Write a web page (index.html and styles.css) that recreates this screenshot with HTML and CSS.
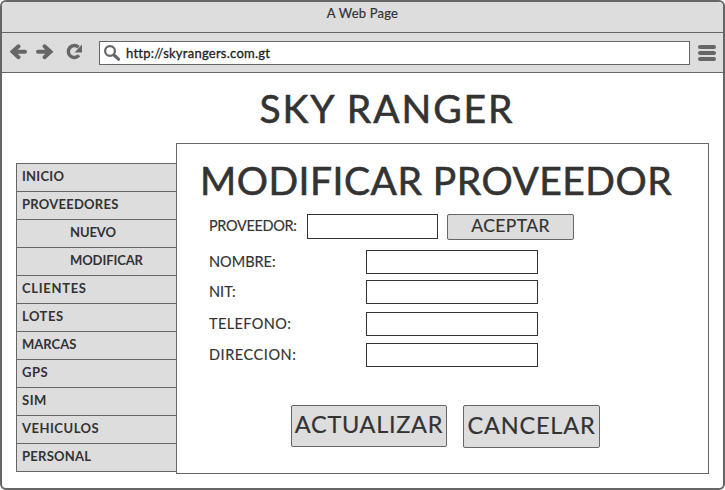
FILE: index.html
```html
<!DOCTYPE html>
<html lang="es">
<head>
<meta charset="utf-8">
<title>A Web Page</title>
<link rel="stylesheet" href="styles.css">
</head>
<body>
<div class="window">
  <header class="titlebar"><span>A Web Page</span></header>
  <nav class="toolbar">
    <svg class="nav-icons" width="76" height="20" viewBox="0 0 76 20" fill="none" stroke="#666" stroke-width="4">
      <path d="M8.500 4.300 2.500 9.700l6 5.500M3.500 9.700h11.500" stroke-linecap="round"/>
      <path d="M34.500 4.300l6 5.400-6 5.500M39.500 9.700H28" stroke-linecap="round"/>
      <path d="M68.500 5.200A6 6 0 1 0 69 13.300" stroke-width="3.400"/>
      <path d="M72 2.500v8h-7.500z" fill="#666" stroke="none"/>
    </svg>
    <div class="address">
      <svg width="18" height="18" viewBox="0 0 18 18" fill="none" stroke="#666"><circle cx="6" cy="6" r="4.900" stroke-width="2.200"/><path d="m10.500 10.500 4 3.700" stroke-width="3.200" stroke-linecap="round"/></svg>
      <span class="url">http://skyrangers.com.gt</span>
    </div>
    <div class="menu-icon"><i></i><i></i><i></i></div>
  </nav>
  <h1><span>SKY RANGER</span></h1>
  <main class="content">
    <ul class="sidebar">
      <li class="snug">INICIO</li>
      <li class="snug">PROVEEDORES</li>
      <li class="sub">NUEVO</li>
      <li class="sub">MODIFICAR</li>
      <li class="wide">CLIENTES</li>
      <li>LOTES</li>
      <li class="tight">MARCAS</li>
      <li>GPS</li>
      <li>SIM</li>
      <li>VEHICULOS</li>
      <li class="snug">PERSONAL</li>
    </ul>
    <section class="panel">
      <h2><span>MODIFICAR PROVEEDOR</span></h2>
      <div class="search">
        <label for="prov">PROVEEDOR:</label>
        <input id="prov" type="text">
        <button class="accept">ACEPTAR</button>
      </div>
      <div class="fields">
        <div class="row"><label for="nombre">NOMBRE:</label><input id="nombre" type="text"></div>
        <div class="row nit"><label for="nit">NIT:</label><input id="nit" type="text"></div>
        <div class="row tel"><label for="tel">TELEFONO:</label><input id="tel" type="text"></div>
        <div class="row dir"><label for="dir">DIRECCION:</label><input id="dir" type="text"></div>
      </div>
      <div class="actions">
        <button class="update">ACTUALIZAR</button>
        <button class="cancel">CANCELAR</button>
      </div>
    </section>
  </main>
</div>
</body>
</html>
```
FILE: styles.css
```css
* { box-sizing: border-box; }
body { margin: 0; background: #fff; color: #333; font-family: Lato, sans-serif; }
.window { width: 725px; height: 490px; border: 2px solid #666; border-radius: 6px; overflow: hidden; background: #fff; }
.titlebar { height: 31px; border-bottom: 1px solid #666; background: #ddd; text-align: center; font-size: 13px; line-height: 23px; letter-spacing: .2px; -webkit-text-stroke: .2px #333; }
.toolbar { height: 40px; border-bottom: 1px solid #666; background: #ddd; display: flex; align-items: flex-start; padding: 8px 0 0 8px; }
.nav-icons { margin-top: 1px; }
.address { width: 591px; height: 24px; margin-left: 13px; border: 1px solid #666; background: #fff; display: flex; padding: 3px 0 0 4px; }
.url { margin-left: 4px; font-size: 13px; line-height: 17px; letter-spacing: .25px; color: #222; -webkit-text-stroke: .3px #222; }
.menu-icon { width: 18px; margin: 4px 0 0 8px; display: grid; gap: 2px; }
.menu-icon i { height: 4px; border-radius: 2px; background: #666; }
h1, h2 { margin: 0; font-weight: 400; font-size: 39px; line-height: 48px; white-space: nowrap; -webkit-text-stroke: .6px #333; }
h1 { height: 70px; padding: 11px 0 0 257.500px; letter-spacing: 1.900px; }
.content { display: flex; padding-left: 14px; align-items: flex-start; }
.sidebar { width: 160px; height: 309px; margin: 20px 0 0; padding: 0; list-style: none; border: 1px solid #666; border-right: 0; background: #ddd; }
.sidebar li { height: 28px; padding-left: 5px; border-bottom: 1px solid #666; font-size: 13px; font-weight: 700; line-height: 25px; letter-spacing: .5px; }
.sidebar li:last-child { border-bottom: 0; }
.sidebar .snug { letter-spacing: .25px; }
.sidebar .tight { letter-spacing: 0; }
.sidebar .wide { letter-spacing: .7px; }
.sidebar .sub { padding-left: 53px; letter-spacing: -.1px; }
.panel { width: 533px; height: 331px; border: 1px solid #666; background: #fff; }
h2 { height: 70px; padding: 12px 0 0 23px; letter-spacing: .5px; }
label { font-size: 14.500px; line-height: 24px; white-space: nowrap; -webkit-text-stroke: .15px #333; }
input { height: 24px; margin: 0; padding: 0 4px; border: 1px solid #333; background: #fff; font: inherit; outline: 0; }
button { margin: 0; padding: 0; border: 1px solid #666; border-radius: 2px; background: #ddd; color: #333; font-family: inherit; white-space: nowrap; -webkit-text-stroke: .2px #333; }
.search { display: flex; height: 36px; padding-left: 32px; align-items: flex-start; }
.search label { width: 98px; letter-spacing: -.35px; }
.search input { width: 131px; height: 25px; }
.accept { width: 127px; height: 26px; margin-left: 9px; padding-bottom: 3px; font-size: 17.500px; line-height: 21px; letter-spacing: .4px; }
.fields { padding-left: 32px; }
.row { display: flex; height: 24px; }
.row label { width: 157px; }
.row input { width: 172px; }
.nit { margin-top: 6px; }
.tel { margin-top: 8px; }
.tel label { letter-spacing: .4px; }
.dir { margin-top: 7px; }
.dir label { letter-spacing: .55px; }
.actions { display: flex; align-items: flex-start; gap: 16px; margin: 38px 0 0 114px; }
.actions button { padding-bottom: 3px; font-size: 23.500px; letter-spacing: .7px; }
.update { width: 156px; height: 42px; line-height: 37px; }
.actions .cancel { width: 137px; height: 43px; line-height: 38px; letter-spacing: .8px; }
```
